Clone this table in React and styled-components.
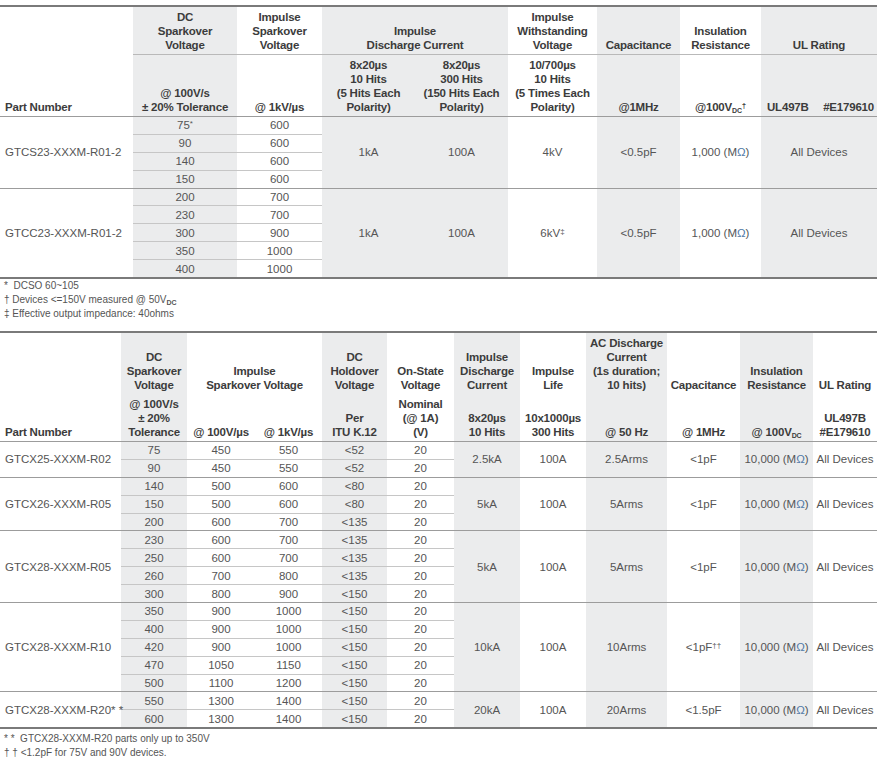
import React from 'react'
import styled, { createGlobalStyle } from 'styled-components'

const Global = createGlobalStyle`
  body {
    margin: 0;
    background: #fff;
    font-family: "Liberation Sans", Arial, sans-serif;
  }
`

const Page = styled.div`
  width: 880px;
  padding-top: 5px;
`

const Table = styled.table`
  width: 877px;
  border-collapse: collapse;
  table-layout: fixed;
  border-top: 2px solid #7a7a7a;
  border-bottom: 2px solid #7a7a7a;
`

const Col = styled.col`
  background: ${p => (p.$shade ? '#ebeced' : 'transparent')};
`

const Head = styled.thead`
  border-bottom: 1.5px solid #8c8c8c;
`

const Th = styled.th`
  font-size: 11.5px;
  line-height: 14px;
  font-weight: 700;
  color: #3c3c3c;
  text-align: ${p => (p.$left ? 'left' : 'center')};
  vertical-align: bottom;
  padding: ${p => (p.$left ? '3px 4px 2px 5px' : '3px 1px 2px')};
  border-bottom: ${p => (p.$divider ? '1px solid #b9b9b9' : 'none')};
  letter-spacing: -0.2px;
`

const Split = styled.div`
  display: flex;
  justify-content: space-between;
  padding: 0 2px 0 5px;
`

const Td = styled.td`
  height: 16.9px;
  padding: 0 2px 0 ${p => (p.$left ? '5px' : '2px')};
  font-size: 11.5px;
  line-height: 14px;
  color: #555;
  text-align: ${p => (p.$left ? 'left' : 'center')};
  vertical-align: middle;
  white-space: nowrap;
  border-top: 1px solid ${p => (p.$group ? '#9c9c9c' : '#c6c6c6')};
`

const Sup = styled.sup`
  font-size: 8px;
  vertical-align: 3px;
  line-height: 0;
`

const Sub = styled.sub`
  font-size: 7px;
  font-weight: 700;
  vertical-align: -2px;
  line-height: 0;
`

const Ohm = styled.span`
  color: #4f79a8;
`

const Notes = styled.div`
  padding: ${p => p.$top}px 0 0 4px;
  font-size: 10px;
  line-height: 14px;
  color: #555;
  height: ${p => p.$height}px;
`

const Mohm = () => (
  <>
    (M<Ohm>Ω</Ohm>)
  </>
)

const topGroups = [
  {
    part: 'GTCS23-XXXM-R01-2',
    rows: [['75', '600', '*'], ['90', '600'], ['140', '600'], ['150', '600']],
    tail: ['1kA', '100A', '4kV', '<0.5pF'],
  },
  {
    part: 'GTCC23-XXXM-R01-2',
    rows: [['200', '700'], ['230', '700'], ['300', '900'], ['350', '1000'], ['400', '1000']],
    tail: ['1kA', '100A', <>6kV<Sup>‡</Sup></>, '<0.5pF'],
  },
]

const bottomGroups = [
  {
    part: 'GTCX25-XXXM-R02',
    rows: [['75', '450', '550', '<52'], ['90', '450', '550', '<52']],
    tail: ['2.5kA', '100A', '2.5Arms', '<1pF'],
  },
  {
    part: 'GTCX26-XXXM-R05',
    rows: [['140', '500', '600', '<80'], ['150', '500', '600', '<80'], ['200', '600', '700', '<135']],
    tail: ['5kA', '100A', '5Arms', '<1pF'],
  },
  {
    part: 'GTCX28-XXXM-R05',
    rows: [
      ['230', '600', '700', '<135'],
      ['250', '600', '700', '<135'],
      ['260', '700', '800', '<135'],
      ['300', '800', '900', '<150'],
    ],
    tail: ['5kA', '100A', '5Arms', '<1pF'],
  },
  {
    part: 'GTCX28-XXXM-R10',
    rows: [
      ['350', '900', '1000', '<150'],
      ['400', '900', '1000', '<150'],
      ['420', '900', '1000', '<150'],
      ['470', '1050', '1150', '<150'],
      ['500', '1100', '1200', '<150'],
    ],
    tail: ['10kA', '100A', '10Arms', <>&lt;1pF<Sup>††</Sup></>],
  },
  {
    part: 'GTCX28-XXXM-R20* *',
    rows: [['550', '1300', '1400', '<150'], ['600', '1300', '1400', '<150']],
    tail: ['20kA', '100A', '20Arms', '<1.5pF'],
  },
]

const topCols = [
  [133, false], [104, true], [85, false], [93, true], [93, true],
  [89, false], [83, true], [81, false], [116, true],
]

const bottomCols = [
  [121, false], [66, true], [68, false], [67, false], [65, true], [67, false],
  [66, true], [66, false], [81, true], [73, false], [73, true], [64, false],
]

function TopTable() {
  return (
    <Table>
      <colgroup>
        {topCols.map(([w, shade], i) => (
          <Col key={i} $shade={shade} style={{ width: w }} />
        ))}
      </colgroup>
      <Head>
        <tr>
          <Th $left rowSpan={2}>Part Number</Th>
          <Th $divider>DC<br />Sparkover<br />Voltage</Th>
          <Th $divider>Impulse<br />Sparkover<br />Voltage</Th>
          <Th $divider colSpan={2}>Impulse<br />Discharge Current</Th>
          <Th $divider>Impulse<br />Withstanding<br />Voltage</Th>
          <Th $divider>Capacitance</Th>
          <Th $divider>Insulation<br />Resistance</Th>
          <Th $divider>UL Rating</Th>
        </tr>
        <tr>
          <Th>@ 100V/s<br />± 20% Tolerance</Th>
          <Th>@ 1kV/µs</Th>
          <Th>8x20µs<br />10 Hits<br />(5 Hits Each<br />Polarity)</Th>
          <Th>8x20µs<br />300 Hits<br />(150 Hits Each<br />Polarity)</Th>
          <Th>10/700µs<br />10 Hits<br />(5 Times Each<br />Polarity)</Th>
          <Th>@1MHz</Th>
          <Th>@100V<Sub>DC</Sub><Sup>†</Sup></Th>
          <Th><Split><span>UL497B</span><span>#E179610</span></Split></Th>
        </tr>
      </Head>
      <tbody>
        {topGroups.map(g =>
          g.rows.map(([dc, imp, mark], i) => (
            <tr key={g.part + dc}>
              {i === 0 && <Td $left $group rowSpan={g.rows.length}>{g.part}</Td>}
              <Td $group={i === 0}>{dc}{mark && <Sup>{mark}</Sup>}</Td>
              <Td $group={i === 0}>{imp}</Td>
              {i === 0 && (
                <>
                  {g.tail.map((v, k) => (
                    <Td key={k} $group rowSpan={g.rows.length}>{v}</Td>
                  ))}
                  <Td $group rowSpan={g.rows.length}>1,000 <Mohm /></Td>
                  <Td $group rowSpan={g.rows.length}>All Devices</Td>
                </>
              )}
            </tr>
          ))
        )}
      </tbody>
    </Table>
  )
}

function BottomTable() {
  return (
    <Table>
      <colgroup>
        {bottomCols.map(([w, shade], i) => (
          <Col key={i} $shade={shade} style={{ width: w }} />
        ))}
      </colgroup>
      <Head>
        <tr>
          <Th $left rowSpan={2}>Part Number</Th>
          <Th>DC<br />Sparkover<br />Voltage</Th>
          <Th colSpan={2}>Impulse<br />Sparkover Voltage</Th>
          <Th>DC<br />Holdover<br />Voltage</Th>
          <Th>On-State<br />Voltage</Th>
          <Th>Impulse<br />Discharge<br />Current</Th>
          <Th>Impulse<br />Life</Th>
          <Th>AC Discharge<br />Current<br />(1s duration;<br />10 hits)</Th>
          <Th>Capacitance</Th>
          <Th>Insulation<br />Resistance</Th>
          <Th>UL Rating</Th>
        </tr>
        <tr>
          <Th>@ 100V/s<br />± 20%<br />Tolerance</Th>
          <Th>@ 100V/µs</Th>
          <Th>@ 1kV/µs</Th>
          <Th>Per<br />ITU K.12</Th>
          <Th>Nominal<br />(@ 1A)<br />(V)</Th>
          <Th>8x20µs<br />10 Hits</Th>
          <Th>10x1000µs<br />300 Hits</Th>
          <Th>@ 50 Hz</Th>
          <Th>@ 1MHz</Th>
          <Th>@ 100V<Sub>DC</Sub></Th>
          <Th>UL497B<br />#E179610</Th>
        </tr>
      </Head>
      <tbody>
        {bottomGroups.map(g =>
          g.rows.map((cells, i) => (
            <tr key={g.part + cells[0]}>
              {i === 0 && <Td $left $group rowSpan={g.rows.length}>{g.part}</Td>}
              {cells.map((v, k) => (
                <Td key={k} $group={i === 0}>{v}</Td>
              ))}
              <Td $group={i === 0}>20</Td>
              {i === 0 && (
                <>
                  {g.tail.map((v, k) => (
                    <Td key={k} $group rowSpan={g.rows.length}>{v}</Td>
                  ))}
                  <Td $group rowSpan={g.rows.length}>10,000 <Mohm /></Td>
                  <Td $group rowSpan={g.rows.length}>All Devices</Td>
                </>
              )}
            </tr>
          ))
        )}
      </tbody>
    </Table>
  )
}

export default function App() {
  return (
    <Page>
      <Global />
      <TopTable />
      <Notes $top={0} $height={52}>
        * &nbsp;DCSO 60~105<br />
        † Devices &lt;=150V measured @ 50V<Sub>DC</Sub><br />
        ‡ Effective output impedance: 40ohms
      </Notes>
      <BottomTable />
      <Notes $top={3} $height={32}>
        * * &nbsp;GTCX28-XXXM-R20 parts only up to 350V<br />
        † † &lt;1.2pF for 75V and 90V devices.
      </Notes>
    </Page>
  )
}
